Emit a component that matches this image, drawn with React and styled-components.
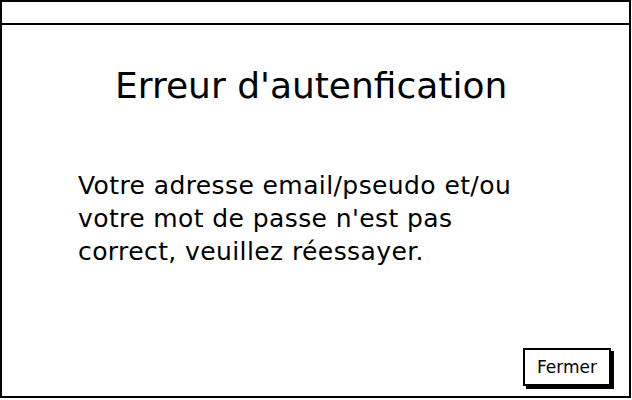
import React from "react";
import styled, { createGlobalStyle } from "styled-components";

const GlobalStyle = createGlobalStyle`
  html, body {
    margin: 0;
    padding: 0;
    background: #ffffff;
  }
  body {
    font-family: "DejaVu Sans", "Noto Sans", sans-serif;
    color: #000000;
  }
`;

const Window = styled.div`
  box-sizing: border-box;
  width: 631px;
  height: 398px;
  border: 2px solid #000;
  display: flex;
  flex-direction: column;
  background: #fff;
`;

const TitleBar = styled.div`
  height: 21px;
  border-bottom: 2px solid #000;
`;

const Body = styled.div`
  flex: 1;
  display: flex;
  flex-direction: column;
  padding: 40px 0 0 76px;
`;

const Title = styled.h1`
  margin: 0 0 0 37px;
  font-size: 36px;
  font-weight: normal;
  letter-spacing: 0;
  line-height: 42px;
`;

const Message = styled.p`
  margin: 62px 0 0 0;
  font-size: 25px;
  letter-spacing: 0.4px;
  line-height: 33px;
`;

const Footer = styled.div`
  margin-top: auto;
  display: flex;
  justify-content: flex-end;
  padding: 0 18px 10px 0;
`;

const Button = styled.button`
  box-sizing: border-box;
  width: 88px;
  height: 38px;
  border: 2px solid #000;
  background: #fff;
  box-shadow: 3px 3px 0 #000;
  font-family: inherit;
  font-size: 17px;
  color: #000;
  padding: 0;
  cursor: pointer;
`;

export default function App() {
  return (
    <>
      <GlobalStyle />
      <Window>
        <TitleBar />
        <Body>
          <Title>Erreur d'autenfication</Title>
          <Message>
            Votre adresse email/pseudo et/ou
            <br />
            votre mot de passe n'est pas
            <br />
            correct, veuillez réessayer.
          </Message>
          <Footer>
            <Button>Fermer</Button>
          </Footer>
        </Body>
      </Window>
    </>
  );
}
